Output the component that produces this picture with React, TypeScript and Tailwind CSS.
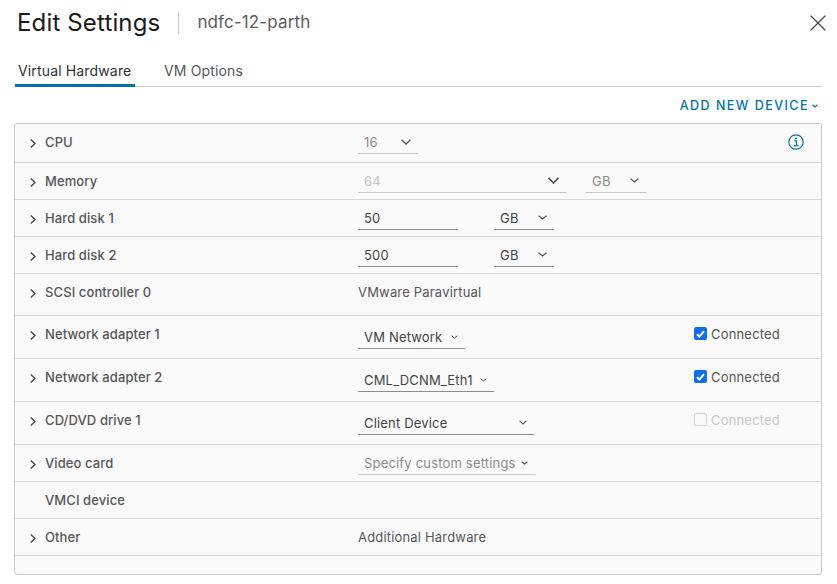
import { X } from "lucide-react"
import type { ReactNode } from "react"

function Caret({ w, stroke = 1.3, className = "text-[#555]" }: { w: number; stroke?: number; className?: string }) {
  const h = Math.round(w * 0.6)
  return (
    <svg width={w} height={h} viewBox={`0 0 ${w} ${h}`} fill="none" className={className}>
      <path d={`M0.6 0.8 ${w / 2} ${h - 1} ${w - 0.6} 0.8`} stroke="currentColor" strokeWidth={stroke} />
    </svg>
  )
}

function Select({ value, width, height = "h-6", disabled, faint, caret, stroke }: {
  value: string
  width: string
  height?: string
  disabled?: boolean
  faint?: boolean
  caret?: number
  stroke?: number
}) {
  return (
    <div className={`flex items-center justify-between border-b pl-1.5 pr-[7px] ${height} ${width} ${disabled ? "border-[#c8c8c8]" : "border-[#8c8c8c]"}`}>
      <span className={`pt-[2px] ${faint ? "text-[#c4c4c4]" : disabled ? "text-[#8c8c8c]" : "text-[#444]"}`}>{value}</span>
      {caret && <Caret w={caret} stroke={stroke} />}
    </div>
  )
}

function Connected({ checked, disabled }: { checked?: boolean; disabled?: boolean }) {
  return (
    <div className={`flex items-center gap-[4px] ${disabled ? "text-[#c8c8c8]" : "text-[#565656]"}`}>
      {checked ? (
        <span className="flex h-[13px] w-[13px] -translate-y-px items-center justify-center rounded-[2px] bg-[#0f6fe8]">
          <svg width="9" height="8" viewBox="0 0 9 8" fill="none">
            <path d="M1 4.2 3.4 6.5 8 1.2" stroke="white" strokeWidth="1.9" />
          </svg>
        </span>
      ) : (
        <span className="h-[13px] w-[13px] -translate-y-px rounded-[2px] border border-[#cfcfcf]" />
      )}
      <span>Connected</span>
    </div>
  )
}

function Row({ label, height, valueTop, chevron = true, chevronDrop = "", children, right }: {
  label: string
  height: string
  valueTop?: string
  chevron?: boolean
  chevronDrop?: string
  children?: ReactNode
  right?: ReactNode
}) {
  return (
    <div className={`flex border-b border-[#d7d7d7] ${height}`}>
      <div className="mt-[10px] flex h-[18px] w-[343px] shrink-0 items-center text-[#565656]">
        <span className={`flex w-[30px] justify-center pl-[6px] ${chevronDrop}`}>
          {chevron && (
            <svg width="6" height="9" viewBox="0 0 6 9" fill="none" className="text-[#444]">
              <path d="M0.8 0.6 5 4.5 0.8 8.4" stroke="currentColor" strokeWidth="1.3" />
            </svg>
          )}
        </span>
        <span className="font-medium tracking-[0.1px]">{label}</span>
      </div>
      <div className={`flex w-[336px] shrink-0 gap-5 ${valueTop ?? ""}`}>{children}</div>
      {right}
    </div>
  )
}

export default function App() {
  return (
    <div className="h-[584px] w-[837px] overflow-hidden bg-white text-[13px] tracking-[0.18px] font-['Inter','Liberation_Sans',sans-serif] text-[#565656]">
      <header className="flex h-[45px] items-center pl-[17px] pr-[5px]">
        <h1 className="text-[24px] leading-none tracking-[0.15px] text-[#1a1a1a]">Edit Settings</h1>
        <div className="ml-[18px] h-[22px] w-px bg-[#c8c8c8]" />
        <span className="ml-[18px] text-[17px] tracking-[0.13px] text-[#5c5c5c]">ndfc-12-parth</span>
        <X size={28} strokeWidth={1.1} className="ml-auto text-[#4a4a4a]" />
      </header>

      <nav className="mx-[15px] mt-[13px] flex h-[29px] border-b border-[#c8c8c8] text-[14px] tracking-[0.15px]">
        <div className="h-[29px] w-[120px] border-b-[3px] border-[#0072a3] pl-[3px] leading-[26px] text-[#333]">Virtual Hardware</div>
        <div className="ml-[29px] leading-[26px] text-[#565656]">VM Options</div>
      </nav>

      <div className="mr-[19px] mt-[10px] flex h-[18px] items-center justify-end gap-[3px] text-[12.5px] font-medium tracking-[1.47px] text-[#0072a3]">
        ADD NEW DEVICE
        <Caret w={6} stroke={1.2} className="text-[#0072a3]" />
      </div>

      <section className="ml-[14px] mt-[8px] h-[452px] w-[808px] rounded-[3px] border border-[#c8c8c8] bg-[#fafafa]">
        <Row label="CPU" height="h-[39px]" valueTop="mt-[6px]" right={
          <svg width="16" height="16" viewBox="0 0 16 16" fill="none" className="ml-[94px] mt-[10px] text-[#0072a3]">
            <circle cx="8" cy="8" r="7.2" stroke="currentColor" strokeWidth="1.2" />
            <circle cx="8" cy="4.4" r="1" fill="currentColor" />
            <path d="M6.3 6.9H8.5V11.5M6 11.7H10.6" stroke="currentColor" strokeWidth="1.2" />
          </svg>
        }>
          <Select value="16" width="w-[60px]" disabled caret={10} />
        </Row>
        <Row label="Memory" height="h-[37px]" valueTop="mt-[6px]">
          <Select value="64" width="w-[208px]" disabled faint caret={11} stroke={1.7} />
          <Select value="GB" width="w-[60px]" disabled caret={9} />
        </Row>
        <Row label="Hard disk 1" height="h-[37px]" valueTop="mt-[6px]">
          <Select value="50" width="w-[100px]" />
          <div className="ml-4"><Select value="GB" width="w-[60px]" caret={9} stroke={1.1} /></div>
        </Row>
        <Row label="Hard disk 2" height="h-[37px]" valueTop="mt-[6px]">
          <Select value="500" width="w-[100px]" />
          <div className="ml-4"><Select value="GB" width="w-[60px]" caret={9} stroke={1.1} /></div>
        </Row>
        <Row label="SCSI controller 0" height="h-[42px]" chevronDrop="mt-[1px]" valueTop="mt-[9px]">
          <span className="leading-[18px]">VMware Paravirtual</span>
        </Row>
        <Row label="Network adapter 1" height="h-[43px]" chevronDrop="mt-[1px]" valueTop="mt-[9px]" right={<div className="mt-[9px]"><Connected checked /></div>}>
          <Select value="VM Network" width="w-[107px]" caret={7} stroke={1} />
        </Row>
        <Row label="Network adapter 2" height="h-[43px]" chevronDrop="mt-[1px]" valueTop="mt-[9px]" right={<div className="mt-[9px]"><Connected checked /></div>}>
          <Select value="CML_DCNM_Eth1" width="w-[136px]" caret={7} stroke={1} />
        </Row>
        <Row label="CD/DVD drive 1" height="h-[43px]" chevronDrop="mt-[1px]" valueTop="mt-[9px]" right={<div className="mt-[9px]"><Connected disabled /></div>}>
          <Select value="Client Device" width="w-[176px]" caret={8} stroke={1.1} />
        </Row>
        <Row label="Video card" height="h-[37px]" valueTop="mt-[6px]">
          <Select value="Specify custom settings" width="w-[177px]" disabled caret={7} />
        </Row>
        <Row label="VMCI device" height="h-[37px]" chevron={false} />
        <Row label="Other" height="h-[37px]" valueTop="mt-[9px]">
          <span className="leading-[18px]">Additional Hardware</span>
        </Row>
      </section>
    </div>
  )
}
